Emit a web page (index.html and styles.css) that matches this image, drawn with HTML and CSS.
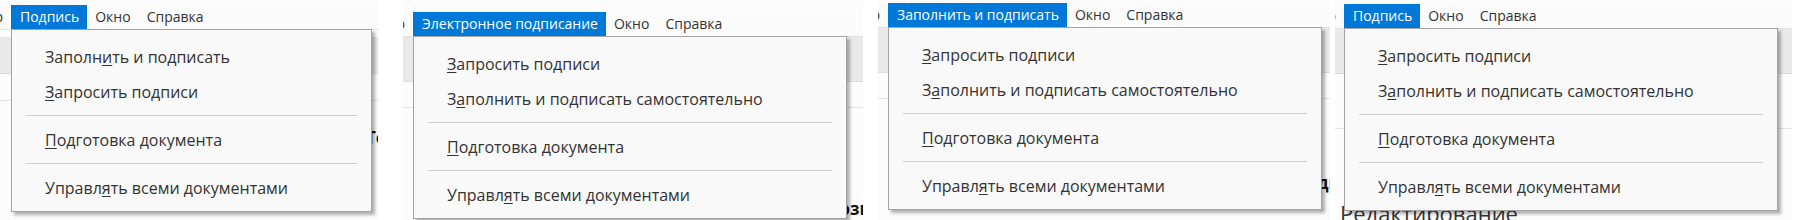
FILE: index.html
```html
<!DOCTYPE html>
<html>
<head>
    <meta charset="utf-8">
    <title>Меню подписи</title>
    <link rel="stylesheet" href="styles.css">
</head>
<body>
    <div class="strip">
        <section class="shot shot-1">
            <nav class="menubar">
                <div class="menu-clip"><span class="menu-item">Просмотр</span></div>
                <div class="menu-item active">Подпись
                    <div class="dropdown">
                        <div class="dd-item">Заполн<u>и</u>ть и подписать</div>
                        <div class="dd-item"><u>З</u>апросить подписи</div>
                        <div class="dd-sep"></div>
                        <div class="dd-item"><u>П</u>одготовка документа</div>
                        <div class="dd-sep"></div>
                        <div class="dd-item">Управл<u>я</u>ть всеми документами</div>
                    </div>
                </div>
                <span class="menu-item">Окно</span>
                <span class="menu-item">Справка</span>
            </nav>
            <div class="toolbar"></div>
            <div class="page">
                <span class="page-note">Текст</span>
            </div>
        </section>

        <section class="shot shot-2">
            <nav class="menubar">
                <div class="menu-clip"><span class="menu-item">Просмотр</span></div>
                <div class="menu-item active">Электронное подписание
                    <div class="dropdown">
                        <div class="dd-item"><u>З</u>апросить подписи</div>
                        <div class="dd-item">З<u>а</u>полнить и подписать самостоятельно</div>
                        <div class="dd-sep"></div>
                        <div class="dd-item"><u>П</u>одготовка документа</div>
                        <div class="dd-sep"></div>
                        <div class="dd-item">Управл<u>я</u>ть всеми документами</div>
                    </div>
                </div>
                <span class="menu-item">Окно</span>
                <span class="menu-item">Справка</span>
            </nav>
            <div class="toolbar"></div>
            <div class="page">
                <span class="page-note">Возможности</span>
            </div>
        </section>

        <section class="shot shot-3">
            <nav class="menubar">
                <div class="menu-clip"><span class="menu-item">Просмотр</span></div>
                <div class="menu-item active">Заполнить и подписать
                    <div class="dropdown">
                        <div class="dd-item"><u>З</u>апросить подписи</div>
                        <div class="dd-item">З<u>а</u>полнить и подписать самостоятельно</div>
                        <div class="dd-sep"></div>
                        <div class="dd-item"><u>П</u>одготовка документа</div>
                        <div class="dd-sep"></div>
                        <div class="dd-item">Управл<u>я</u>ть всеми документами</div>
                    </div>
                </div>
                <span class="menu-item">Окно</span>
                <span class="menu-item">Справка</span>
            </nav>
            <div class="toolbar"></div>
            <div class="page">
                <span class="page-note">Подпись</span>
            </div>
        </section>

        <section class="shot shot-4">
            <nav class="menubar">
                <div class="menu-clip"><span class="menu-item">Просмотр</span></div>
                <div class="menu-item active">Подпись
                    <div class="dropdown">
                        <div class="dd-item"><u>З</u>апросить подписи</div>
                        <div class="dd-item">З<u>а</u>полнить и подписать самостоятельно</div>
                        <div class="dd-sep"></div>
                        <div class="dd-item"><u>П</u>одготовка документа</div>
                        <div class="dd-sep"></div>
                        <div class="dd-item">Управл<u>я</u>ть всеми документами</div>
                    </div>
                </div>
                <span class="menu-item">Окно</span>
                <span class="menu-item">Справка</span>
            </nav>
            <div class="toolbar"></div>
            <div class="page">
                <span class="page-title">Редактирование</span>
            </div>
        </section>
    </div>
</body>
</html>
```

FILE: styles.css
```css
body {
    margin: 0;
    background-color: #fff;
    font-family: "Open Sans", "Noto Sans", sans-serif;
    color: #333;
}

.strip {
    display: flex;
    height: 220px;
    overflow: hidden;
}

.shot {
    position: relative;
    flex: none;
    height: 220px;
    overflow: hidden;
    background-color: #fcfcfc;
}

.shot-1 { width: 378px; }
.shot-2 { width: 460px; margin-left: 25px; }
.shot-3 { width: 452px; margin-left: 15px; }
.shot-4 { width: 457px; margin-left: 5px; }

/* menu bar */

.menubar {
    display: flex;
    height: 24px;
    background-color: #fbfbfb;
    border-bottom: 1px solid #e2e2e2;
}

.shot-1 .menubar { margin-top: 5px; }
.shot-2 .menubar { margin-top: 12px; }
.shot-3 .menubar { margin-top: 3px; }
.shot-4 .menubar { margin-top: 4px; }

.menu-clip {
    display: flex;
    justify-content: flex-end;
    overflow: hidden;
    flex: none;
    width: 10px;
}

.shot-1 .menu-clip { width: 11px; }
.shot-4 .menu-clip { width: 9px; }

.menu-item {
    position: relative;
    padding: 0 8px;
    font-size: 14px;
    line-height: 24px;
    white-space: nowrap;
    color: #333;
}

.menu-item.active {
    padding: 0 8px 0 9px;
    background-color: #0078d7;
    color: #fff;
}

/* dropdown */

.dropdown {
    position: absolute;
    top: 100%;
    left: 0;
    z-index: 2;
    box-sizing: border-box;
    width: 434px;
    height: 183px;
    padding-top: 10px;
    background-color: #f9f9f9;
    border: 1px solid #a3a3a3;
    box-shadow: 3px 3px 3px rgba(0, 0, 0, 0.3);
    color: #333;
}

.shot-1 .dropdown { width: 361px; }

.dd-item {
    height: 35px;
    padding-left: 33px;
    font-size: 16px;
    line-height: 35px;
    white-space: nowrap;
}

.dd-item u {
    text-underline-offset: 2px;
}

.dd-sep {
    height: 1px;
    margin: 5px 14px 7px;
    background-color: #cfcfcf;
}

/* page behind the menu */

.toolbar {
    background-color: #e9e9e9;
    border-bottom: 1px solid #dcdcdc;
}

.shot-1 .toolbar { margin-top: 7px; height: 36px; }
.shot-2 .toolbar { height: 44px; }
.shot-3 .toolbar { height: 44px; }
.shot-4 .toolbar { height: 44px; }

.page {
    border-top: 1px solid #e3e3e3;
}

.shot-1 .page { margin-top: 26px; }
.shot-2 .page { margin-top: 25px; }
.shot-3 .page { margin-top: 25px; }
.shot-4 .page { margin-top: 54px; }

.page-note {
    display: block;
    font-size: 17px;
    font-weight: 700;
    color: #111;
    white-space: nowrap;
}

.shot-1 .page-note { margin: 25px 0 0 366px; }
.shot-2 .page-note { margin: 89px 0 0 425px; }
.shot-3 .page-note { margin: 72px 0 0 416px; }

.page-title {
    display: block;
    margin: 73px 0 0 5px;
    font-size: 22px;
    line-height: 22px;
    white-space: nowrap;
    color: #333;
}
```
